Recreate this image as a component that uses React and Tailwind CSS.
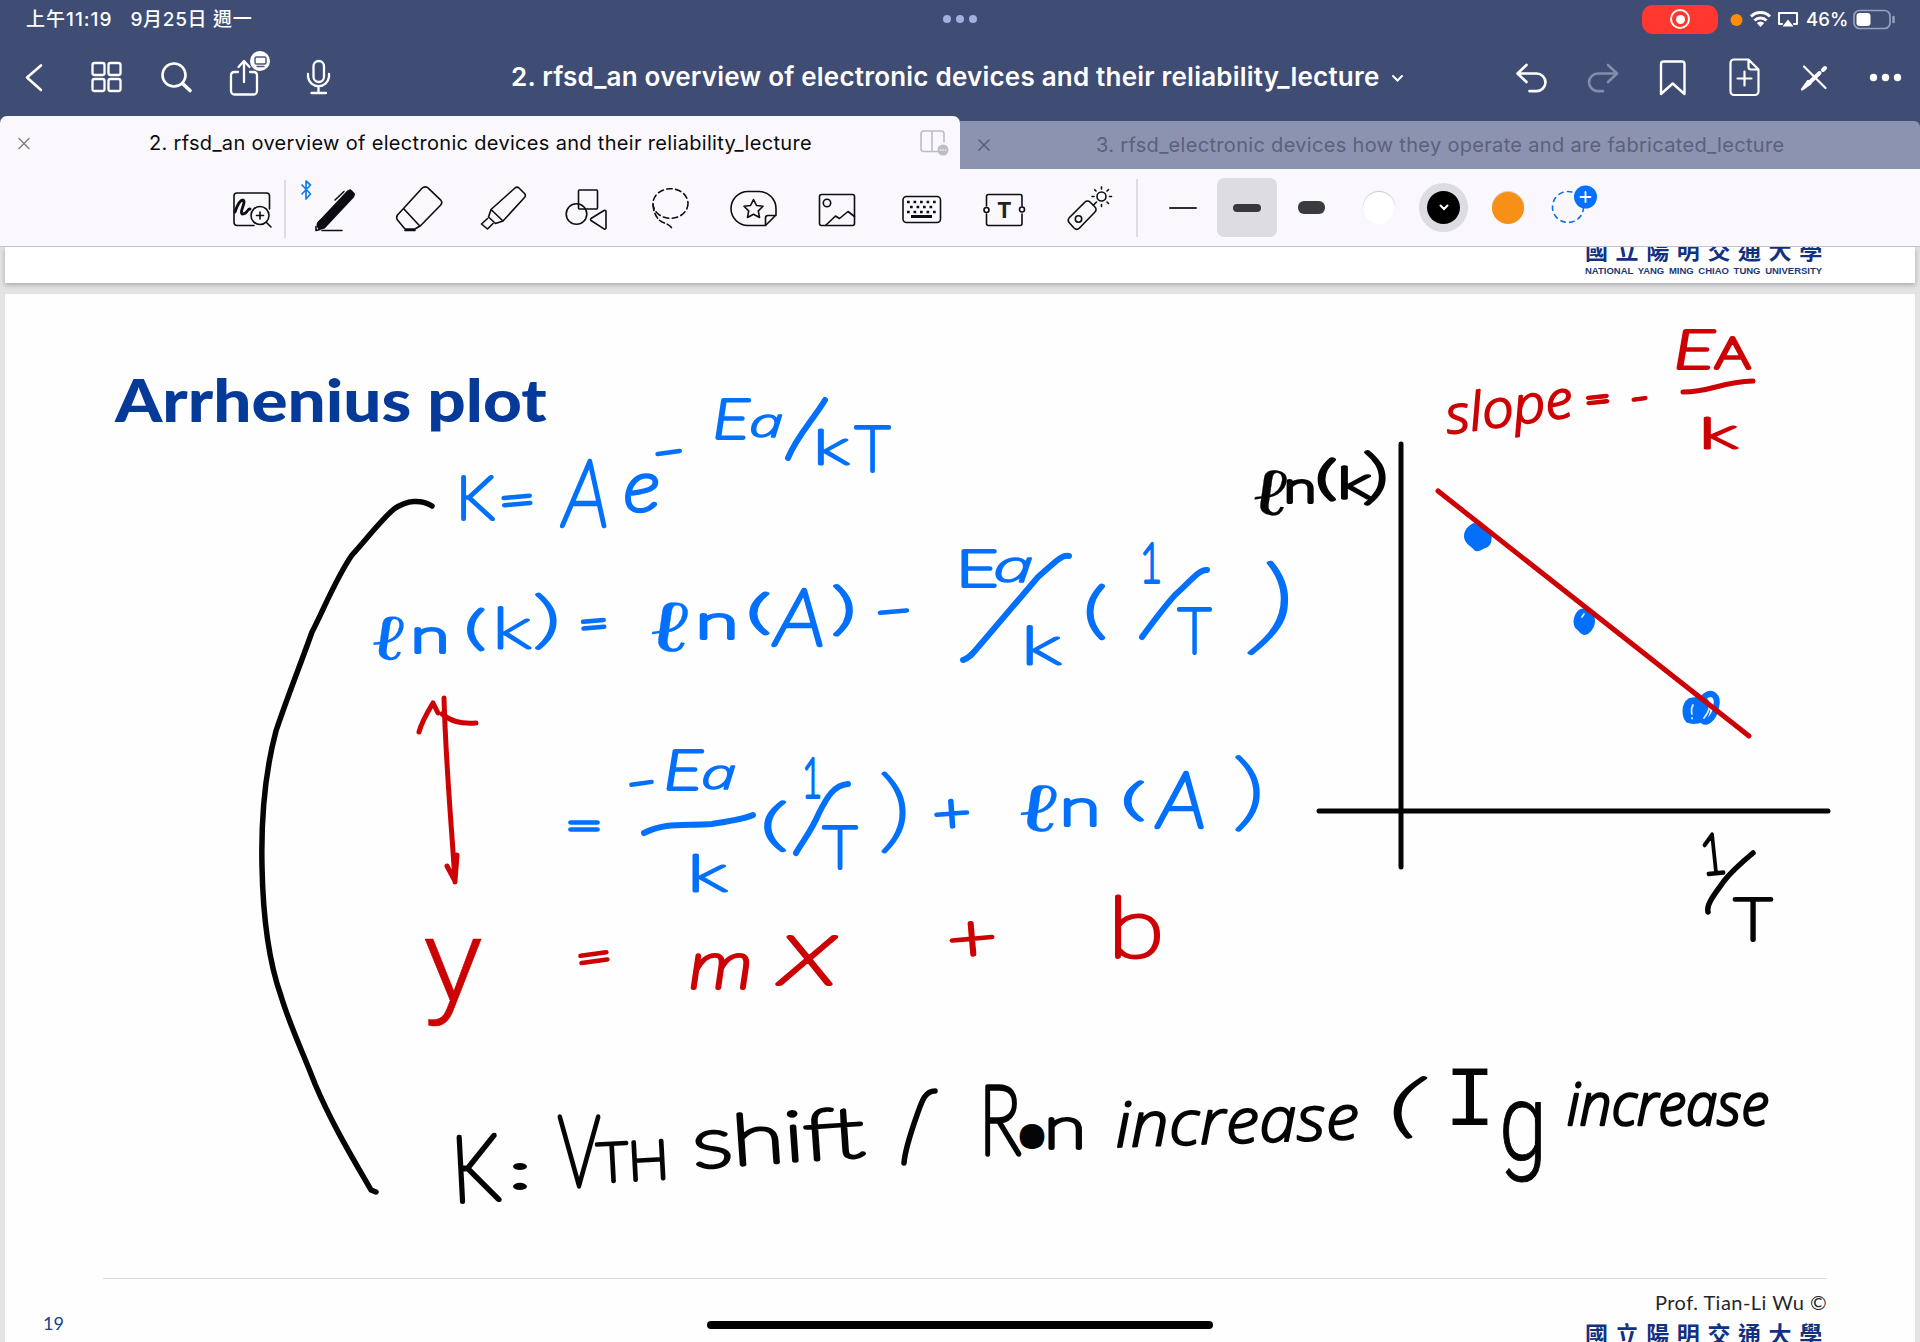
import React from "react";

const BLUE = "#0270fb";
const RED = "#cc0205";
const INK = "#050507";

/* A cell of a bar: its viewBox is the slice of the screen that it covers. */
function Cell({ x, y, w, h, children, stroke = "#fff", sw = 2.6, label }) {
  return (
    <svg
      aria-label={label}
      width={w}
      height={h}
      viewBox={`${x} ${y} ${w} ${h}`}
      className="block shrink-0"
      fill="none"
      stroke={stroke}
      strokeWidth={sw}
      strokeLinecap="round"
      strokeLinejoin="round"
    >
      {children}
    </svg>
  );
}

function StatusBar() {
  return (
    <div className="flex h-[38px] items-center text-[18px] leading-none text-white">
      <div className="flex w-[940px] items-center gap-[18px] pl-[26px] text-[19px] font-medium">
        <span className="tracking-[1px]">上午11:19</span>
        <span className="tracking-[0.700px]">9月25日 週一</span>
      </div>
      <div className="flex w-[40px] justify-center gap-[5px]">
        <i className="size-[8px] rounded-full bg-[#a3afde]" />
        <i className="size-[8px] rounded-full bg-[#a3afde]" />
        <i className="size-[8px] rounded-full bg-[#a3afde]" />
      </div>
      <div className="ml-[662px] flex h-[29px] w-[76px] items-center justify-center rounded-[11px] bg-[#ff372f]">
        <div className="flex size-[20px] items-center justify-center rounded-full border-2 border-white">
          <i className="size-[9px] rounded-full bg-white" />
        </div>
      </div>
      <Cell x={1718} y={0} w={86} h={38} label="status" sw={2}>
        <circle cx="1736.5" cy="20" r="6" fill="#ff8d0a" stroke="none" />
        <path d="M1751 16.5a13.5 13.5 0 0 1 19 0M1754.5 20.5a8.6 8.6 0 0 1 12 0" strokeWidth="3" strokeLinecap="butt" />
        <path d="M1760.500 27l-3.700-4a5.300 5.300 0 0 1 7.400 0z" fill="#fff" stroke="none" />
        <path d="M1782 24h-3V13h18v11h-3" />
        <path d="M1788 19.500l5.500 7h-11z" fill="#fff" stroke="none" />
      </Cell>
      <span className="ml-[2px] w-[46px] text-[18.500px] font-medium tracking-[0.100px]">46%</span>
      <Cell x={1852} y={0} w={44} h={38} label="battery">
        <rect x="1854" y="10.500" width="36" height="18" rx="5.500" stroke="#98a1bd" strokeWidth="1.700" />
        <path d="M1893.500 17v5" stroke="#98a1bd" strokeWidth="2.500" />
        <rect x="1856.500" y="13" width="14" height="13" rx="3" fill="#fff" stroke="none" />
      </Cell>
    </div>
  );
}

function NavBar() {
  return (
    <div className="flex h-[78px] items-center">
      <Cell x={0} y={38} w={70} h={78} label="back">
        <path d="M41 65.500L27 77.500l14 12.500" />
      </Cell>
      <Cell x={70} y={38} w={70} h={78} label="pages" sw={2.3}>
        <rect x="92.500" y="63" width="12" height="12" rx="2" />
        <rect x="108.500" y="63" width="12" height="12" rx="2" />
        <rect x="92.500" y="79" width="12" height="12" rx="2" />
        <rect x="108.500" y="79" width="12" height="12" rx="2" />
      </Cell>
      <Cell x={140} y={38} w={70} h={78} label="search">
        <circle cx="174" cy="75" r="11.500" />
        <path d="M182.500 83.500l7.500 7" strokeWidth="3.600" />
      </Cell>
      <Cell x={210} y={38} w={73} h={78} label="share" sw={2.3}>
        <path d="M238 72h-4a3 3 0 0 0-3 3v16a3.500 3.500 0 0 0 3.500 3.500h19a3.500 3.500 0 0 0 3.500-3.500V75a3 3 0 0 0-3-3h-4" />
        <path d="M244 82V62M238.500 67l5.500-6 5.500 6" />
        <circle cx="260" cy="61" r="10" fill="#fff" stroke="none" />
        <rect x="255" y="57" width="11" height="7" rx="1.500" stroke="#4c5a80" strokeWidth="1.500" />
        <path d="M257 66.500h7" stroke="#4c5a80" strokeWidth="1.300" />
      </Cell>
      <Cell x={283} y={38} w={70} h={78} label="microphone" sw={2.3}>
        <rect x="313.500" y="61" width="10.500" height="21" rx="5.200" />
        <path d="M308 74v3a10.600 10.600 0 0 0 21 0v-3M318.500 87v5M311.500 93h14.500" />
      </Cell>
      <div className="flex w-[1143px] items-center pl-[158px]">
        <h1 className="whitespace-nowrap text-[26px] font-semibold leading-none tracking-[0.210px] text-white">
          2. rfsd_an overview of electronic devices and their reliability_lecture
        </h1>
        <svg className="ml-[12px] mt-[3px] shrink-0" width="13" height="9" viewBox="0 0 13 9" fill="none" stroke="#fff" strokeWidth="2" strokeLinecap="round">
          <path d="M2 2l4.500 4.500L11 2" />
        </svg>
      </div>
      <Cell x={1496} y={38} w={71} h={78} label="undo">
        <path d="M1526.500 65l-9 8.500 9 8.500M1518 73.500h18.500a9 8.800 0 0 1 0 17.600h-7" />
      </Cell>
      <Cell x={1567} y={38} w={71} h={78} label="redo" stroke="#848daa">
        <path d="M1608 65l9 8.500-9 8.500M1616.500 73.500h-18.500a9 8.800 0 0 0 0 17.600h5" />
      </Cell>
      <Cell x={1638} y={38} w={71} h={78} label="bookmark" sw={2.4}>
        <path d="M1661 94V64a2.500 2.500 0 0 1 2.500-2.500h18.500a2.500 2.500 0 0 1 2.500 2.500v30l-11.800-10.500z" />
      </Cell>
      <Cell x={1709} y={38} w={71} h={78} label="add page" sw={2.2}>
        <path d="M1748.500 59.500H1734a3.500 3.500 0 0 0-3.500 3.500v28.500a3.500 3.500 0 0 0 3.500 3.500h21a3.500 3.500 0 0 0 3.500-3.500V69.500zM1748.500 60v7a2.500 2.500 0 0 0 2.500 2.500h7M1744.500 71.500v14M1737.500 78.500h14" />
      </Cell>
      <Cell x={1780} y={38} w={70} h={78} label="read only" sw={2.2}>
        <path d="M1804 66.500l21.500 21.500" />
        <path d="M1825 68l-2 2M1819.500 73l-10 9.500" strokeWidth="4" />
        <path d="M1808 81l-6 8.500 8.500-6z" fill="#fff" />
      </Cell>
      <Cell x={1850} y={38} w={70} h={78} label="more">
        <g fill="#fff" stroke="none">
          <circle cx="1873.500" cy="77.500" r="3.700" />
          <circle cx="1885.500" cy="77.500" r="3.700" />
          <circle cx="1897.500" cy="77.500" r="3.700" />
        </g>
      </Cell>
    </div>
  );
}

function Tabs() {
  return (
    <div className="flex h-[53px] items-end">
      <div className="flex h-[53px] w-[960px] items-center rounded-t-[7px] bg-[#faf8fc]">
        <Cell x={0} y={116} w={48} h={53} stroke="#818186" sw={1.5} label="close tab">
          <path d="M19 138.500l10 10M29 138.500l-10 10" />
        </Cell>
        <span className="w-[852px] whitespace-nowrap pl-[101px] text-[20px] leading-none tracking-[0.320px] text-[#0b0b0d]">
          2. rfsd_an overview of electronic devices and their reliability_lecture
        </span>
        <Cell x={900} y={116} w={60} h={53} stroke="#bdbcc1" sw={1.6} label="split view">
          <path d="M938 151.500h-14a3 3 0 0 1-3-3V134a3 3 0 0 1 3-3h17a3 3 0 0 1 3 3v8M932 131v20.500" />
          <circle cx="943" cy="150" r="5.500" fill="#bdbcc1" stroke="none" />
          <path d="M940.500 150h.1M943 150h.1M945.500 150h.1" stroke="#fff" strokeWidth="1.500" />
        </Cell>
      </div>
      <div className="flex h-[48px] w-[960px] items-center rounded-tr-[6px] bg-[#8b93b1]">
        <Cell x={960} y={121} w={48} h={48} stroke="#565c77" sw={1.5} label="close tab">
          <path d="M979 140l10 10M989 140l-10 10" />
        </Cell>
        <span className="whitespace-nowrap pl-[88px] text-[20px] leading-none tracking-[0.320px] text-[#5b617b]">
          3. rfsd_electronic devices how they operate and are fabricated_lecture
        </span>
      </div>
    </div>
  );
}

const tools = [
  {
    name: "zoom window",
    art: (
      <>
        <path d="M254 225.500h-17a3 3 0 0 1-3-3V196a3 3 0 0 1 3-3h29.500a3 3 0 0 1 3 3v13" />
        <path d="M235 212c2-6 5-12 8-12 4 1-5 14 0 14 4 0 5-6 7-5" strokeWidth="2.800" />
        <circle cx="260" cy="215.500" r="9" fill="#faf8fc" />
        <path d="M256.500 215.500h7M260 212v7M266.500 222.500l4.500 4.500" />
        <path d="M285 180.500v57" stroke="#d3d2d7" strokeWidth="1.500" />
      </>
    ),
  },
  {
    name: "pen",
    art: (
      <>
        <path d="M302 185l8.500 9-4.500 5v-18l4.500 4-8.500 9" stroke="#0a7df0" strokeWidth="1.700" />
        <path d="M351 193.500l-30 32" strokeWidth="9.500" strokeLinecap="butt" />
        <path d="M350 192l2.500 2.500" strokeWidth="5" />
        <path d="M323 223l-2 2" strokeWidth="9" />
        <path d="M316 230.500v-4M316 230.500l4-1M322 230.500h20M335 200l9-8.500" strokeWidth="1.600" />
      </>
    ),
  },
  {
    name: "eraser",
    art: (
      <path d="M403.500 208.500l18.500-20.200a4.500 4.500 0 0 1 6.500 0l12 11.500a4 4 0 0 1 0 5.500l-20.500 21zM403.500 208.500l-6 6.500a4.500 4.500 0 0 0 0 5l7.500 9h10l5-3M405 230.500h10" />
    ),
  },
  {
    name: "highlighter",
    art: (
      <path d="M491 209.500l24-21.500a3 3 0 0 1 4 0l5.500 5.500a3 3 0 0 1 0 4L503 221zM491 209.500l-2.500 7.500 7 6.500 7.500-2.500M487.500 218.500l-6 5.500 6 5 5.500-5.500" />
    ),
  },
  {
    name: "shapes",
    art: (
      <>
        <rect x="578.500" y="190" width="19" height="19" rx="1" />
        <circle cx="576.500" cy="214" r="10.300" />
        <path d="M604 210.500a1.300 1.300 0 0 1 2 1.200v16a1.300 1.300 0 0 1-2 1.200l-13-8.400a1.300 1.300 0 0 1 0-2z" />
      </>
    ),
  },
  {
    name: "lasso",
    art: (
      <>
        <ellipse cx="670.500" cy="203.500" rx="17.500" ry="14.800" strokeDasharray="5.500 3.500" />
        <path d="M653 205c1 9 4 14 9 17 6 2 9 4 10.500 7.500" strokeDasharray="5.500 3" />
      </>
    ),
  },
  {
    name: "stickers",
    art: (
      <>
        <path d="M765 225.500h-17a17 17 0 0 1 0-34h11a17 17 0 0 1 17 17v6.500l-10.500 10.500v-7.500a2.500 2.500 0 0 1 2.500-2.500h8" />
        <path d="M753.500 199.500l3 6 6.500.8-4.700 4.600 1.200 6.600-6-3.200-6 3.200 1.200-6.600-4.700-4.600 6.500-.8z" />
      </>
    ),
  },
  {
    name: "image",
    art: (
      <>
        <rect x="819.500" y="194.500" width="35" height="31" rx="2" />
        <circle cx="827" cy="203" r="3.700" />
        <path d="M826 225l9.500-9 4 2.500 8.500-7 6.500 5" />
      </>
    ),
  },
  {
    name: "keyboard",
    art: (
      <>
        <rect x="903" y="196.500" width="37.500" height="26" rx="3.500" />
        <path d="M907 202h29M907 212h29" strokeDasharray="2.700 3.800" strokeLinecap="butt" strokeWidth="2.700" />
        <path d="M910 207h24" strokeDasharray="2.700 3.800" strokeLinecap="butt" strokeWidth="2.700" />
        <path d="M911 216.500h21" strokeLinecap="butt" strokeWidth="3" />
      </>
    ),
  },
  {
    name: "text box",
    art: (
      <>
        <path d="M986.500 206v-9.500a2 2 0 0 1 2-2h31.500a2 2 0 0 1 2 2v9.500M986.500 214v9.500a2 2 0 0 0 2 2h31.500a2 2 0 0 0 2-2V214" />
        <circle cx="986.500" cy="210" r="2.500" />
        <circle cx="1022" cy="209.500" r="2.500" />
        <text x="1004.300" y="218" textAnchor="middle" fill="#222" stroke="none" fontSize="22" fontWeight="700">T</text>
      </>
    ),
  },
  {
    name: "laser pointer",
    art: (
      <>
        <path d="M1069.500 217.500l15.500-15.500a3.500 3.500 0 0 1 5 0l5 5a3.500 3.500 0 0 1 0 5l-15.500 16a4 4 0 0 1-5.500 0l-4.500-5a4 4 0 0 1 0-5.500z" />
        <circle cx="1078.500" cy="219" r="3.200" />
        <circle cx="1101.500" cy="196.500" r="4.500" />
        <path d="M1101.500 187v2M1101.500 204.500v2M1092 196.500h2M1109.500 196.500h2M1094.700 189.700l1.300 1.300M1107 202l1.500 1.500M1108.500 189.700l-1.500 1.300M1096.500 202l-3 3" />
      </>
    ),
  },
];

function Toolbar() {
  return (
    <div className="flex h-[77px] items-center bg-[#faf8fc] pl-[210px]">
      {tools.map((t, i) => (
        <Cell key={t.name} label={t.name} x={210 + 84 * i} y={169} w={84} h={77} stroke="#0c0c14" sw={1.6}>
          {t.art}
        </Cell>
      ))}
      <i className="ml-[2px] h-[58px] w-[2px] bg-[#dddce1]" />
      <i className="ml-[31px] h-[2px] w-[28px] rounded-full bg-[#2d2c30]" />
      <div className="ml-[20px] flex h-[59px] w-[60px] items-center justify-center rounded-[7px] bg-[#dddce0]">
        <i className="h-[8px] w-[28px] rounded-[4px] bg-[#38373b]" />
      </div>
      <i className="ml-[21px] h-[13px] w-[27px] rounded-[6px] bg-[#3b3a3e]" />
      <i className="ml-[38px] size-[32px] rounded-full bg-white shadow-[0_-1px_1px_#c9c8cc]" />
      <div className="ml-[24px] flex size-[49px] items-center justify-center rounded-full bg-[#dddce0]">
        <div className="flex size-[33px] items-center justify-center rounded-full bg-black">
          <svg width="10" height="7" viewBox="0 0 10 7" fill="none" stroke="#fff" strokeWidth="2" strokeLinecap="round">
            <path d="M1.500 1.500L5 5l3.500-3.500" />
          </svg>
        </div>
      </div>
      <i className="ml-[24px] size-[32px] rounded-full bg-[#f79016] shadow-[0_-1px_1px_#cfc9c4]" />
      <div className="ml-[16px]">
        <Cell x={1540} y={169} w={80} h={77} label="add colour" stroke="#1172dc" sw={1.6}>
          <circle cx="1568" cy="207" r="15.500" strokeDasharray="4.500 4.500" />
          <circle cx="1585.500" cy="197" r="11.500" fill="#0670ff" stroke="none" />
          <path d="M1580.500 197h10M1585.500 192v10" stroke="#fff" strokeWidth="1.800" />
        </Cell>
      </div>
    </div>
  );
}

const LATO = "Lato, sans-serif";
const OPEN = "'Open Sans', sans-serif";
const SCRIPT = "'DejaVu Sans', sans-serif";
const ROBOTO = "Roboto, sans-serif";
const MONO = "'Liberation Mono', monospace";

/* Handwritten words: [text, x, baseline, width, size, rotation, italic, font, stroke] */
const blueWords = [
  ["K", 456, 519, 38, 60, 0, 0],
  ["=", 500, 519, 37, 50, -5, 0],
  ["A", 563, 526, 46, 92, 0, 1, LATO, 4.5],
  ["e", 624, 511, 36, 70, 0, 1, LATO, 4.5],
  ["−", 655, 470, 32, 46, -8, 0],
  ["E", 713, 438, 36, 54, 0, 1],
  ["a", 749, 437, 34, 40, 0, 1, OPEN, 1.5],
  ["k", 813, 464, 36, 48, 0, 0, LATO, 3],
  ["T", 855, 471, 35, 62, 0, 0],
  ["ℓ", 371, 657, 30, 62, 8, 0, SCRIPT, 0.2],
  ["n", 411, 652, 38, 46, 0, 0],
  ["(", 465, 644, 20, 46, 0, 0, LATO, 3.5],
  ["k", 492, 648, 39, 56, 0, 0, LATO, 3],
  [")", 533, 641, 28, 62, 0, 0, LATO, 3],
  ["=", 580, 641, 30, 46, -5, 0],
  ["ℓ", 649, 648, 36, 70, 8, 0, SCRIPT, 0.2],
  ["n", 696, 638, 42, 46, 0, 0],
  ["(", 747, 628, 23, 46, 0, 0, LATO, 3.5],
  ["A", 775, 645, 50, 78, 0, 1, LATO, 4.5],
  [")", 832, 628, 24, 56, 0, 0, LATO, 3.5],
  ["−", 876, 630, 38, 50, -5, 0],
  ["E", 956, 586, 42, 50, 0, 0],
  ["a", 993, 582, 40, 44, 0, 1, OPEN, 1.5],
  ["k", 1021, 664, 40, 52, 0, 0, LATO, 3],
  ["(", 1084, 631, 22, 60, 0, 0],
  ["1", 1140, 582, 22, 54, 0, 0],
  ["T", 1178, 653, 33, 62, 0, 0],
  [")", 1252, 641, 44, 104, 0, 1, LATO, 3],
  ["=", 565, 842, 38, 48, 0, 0],
  ["−", 629, 802, 30, 50, -8, 0],
  ["E", 664, 789, 38, 54, 0, 1],
  ["a", 701, 789, 35, 42, 0, 1, OPEN, 1.5],
  ["k", 687, 891, 40, 50, 0, 0, LATO, 3],
  ["(", 760, 844, 28, 56, 0, 0, LATO, 3],
  ["1", 802, 797, 20, 54, 0, 0],
  ["T", 823, 868, 34, 58, 0, 0],
  [")", 878, 841, 34, 90, 0, 0, LATO, 3],
  ["+", 934, 833, 38, 54, -4, 0],
  ["ℓ", 1018, 828, 36, 66, 8, 0, SCRIPT, 0.2],
  ["n", 1060, 825, 40, 50, 0, 0],
  ["(", 1121, 815, 24, 44, 0, 0, LATO, 3],
  ["A", 1158, 827, 48, 76, 0, 1, LATO, 4.5],
  [")", 1232, 820, 34, 84, 0, 0, LATO, 3],
];

const redWords = [
  ["y", 423, 1001, 60, 116, 0, 0, ROBOTO, 0.5],
  ["=", 578, 977, 37, 50, -8, 0],
  ["m", 689, 988, 64, 66, 0, 1],
  ["x", 780, 984, 58, 96, 0, 1],
  ["+", 949, 963, 50, 66, -5, 0],
  ["b", 1108, 957, 56, 84, 0, 0],
  ["slope", 1448, 434, 128, 52, -8, 1, OPEN, 2],
  ["=", 1586, 413, 26, 36, -6, 0],
  ["-", 1632, 413, 19, 44, -8, 0],
  ["E", 1674, 368, 40, 52, 0, 1],
  ["A", 1715, 368, 35, 42, 0, 0],
  ["k", 1699, 448, 38, 42, 0, 0, LATO, 3],
];

const blackWords = [
  ["ℓ", 1252, 512, 32, 64, 8, 0, SCRIPT, 0.2],
  ["n", 1284, 502, 32, 42, 0, 0],
  ["(", 1316, 494, 20, 46, 0, 0],
  ["k", 1337, 498, 34, 44, 0, 0, LATO, 3.5],
  [")", 1362, 497, 28, 60, 0, 0, LATO, 3],
  ["1", 1702, 875, 26, 56, -6, 0],
  ["T", 1734, 940, 38, 58, 0, 0],
  ["K", 453, 1202, 48, 92, -3, 0, LATO, 5],
  [":", 509, 1188, 22, 48, 0, 0],
  ["V", 558, 1186, 42, 98, 0, 0, LATO, 5.5],
  ["TH", 598, 1182, 72, 54, -3, 0],
  ["shift", 694, 1168, 172, 70, -4, 0],
  ["R", 979, 1154, 42, 96, 0, 0, LATO, 5.5],
  ["o", 1019, 1147, 26, 42, 0, 0],
  ["n", 1044, 1148, 42, 58, 0, 0],
  ["increase", 1116, 1147, 244, 62, -2, 1, OPEN, 2],
  ["(", 1388, 1129, 34, 68, 0, 1, LATO, 3],
  ["I", 1444, 1125, 52, 86, 0, 0, MONO, 0],
  ["g", 1499, 1159, 48, 108, 0, 0, ROBOTO, 1],
  ["increase", 1567, 1125, 202, 58, 0, 1, OPEN, 2.5],
];

function Words({ list, color }) {
  return (
    <g fill={color} stroke={color} strokeLinejoin="round">
      {list.map(([t, x, y, w, s, r, it, font = LATO, sw = 4], i) => (
        <text
          key={i}
          x={x}
          y={y}
          fontFamily={font}
          fontWeight={font === ROBOTO ? 300 : 200}
          fontSize={s}
          fontStyle={it ? "italic" : "normal"}
          strokeWidth={sw}
          textLength={w}
          lengthAdjust="spacingAndGlyphs"
          transform={`rotate(${r} ${x} ${y})`}
        >
          {t}
        </text>
      ))}
    </g>
  );
}

/* Pen layer over the slide: formula words, fraction bars, arrow, and the plot. */
function Annotations() {
  return (
    <svg
      className="absolute left-0 top-0"
      width="1910"
      height="1048"
      viewBox="5 294 1910 1048"
      fill="none"
      strokeLinecap="round"
      strokeLinejoin="round"
    >
      <Words list={blueWords} color={BLUE} />
      <g stroke={BLUE} strokeWidth="6">
        <path d="M825 400C813 420 797 436 788 458" />
        <path d="M1069 556C1062 554 1054 563 1038 577L980 645C974 652 970 658 963 660" />
        <path d="M1207 570C1199 569 1190 582 1175 595C1166 605 1153 622 1142 637" />
        <path d="M644 833C665 822 685 826 712 824C730 821 744 819 753 815" />
        <path d="M848 784C834 785 827 797 819 813C811 832 802 842 796 853" />
      </g>
      <g fill={BLUE} stroke={BLUE} strokeWidth="4">
        <path d="M1474 525l15 8c2 6 0 12-4 13-4 1-5 4-9 3-3-4-7-5-9-9-3-6 1-12 7-15z" />
        <path d="M1581 611c6-2 12 3 12 10 0 6-5 12-9 12-4-1-4-5-7-6-3-5-1-13 4-16z" />
        <path d="M1690 700l13-2c7 4 6 12 3 19-3 5-13 6-18 4-4-4-6-16 2-21z" />
      </g>
      <path d="M1704 697c8-7 15-1 12 10-1 9-8 17-13 14" stroke={BLUE} strokeWidth="6" />
      <path d="M1693 705c-2 4-2 6-1 9M1692 718v.5M1582 617l2-3M1709 702c2 6-1 11-5 16" stroke="#d8eaff" strokeWidth="1.800" />
      <g stroke={INK} strokeWidth="5.500">
        <path d="M432 506C421 499 407 500 394 509C381 520 365 541 352 555C336 578 323 611 312 632C301 663 287 698 276 731C264 776 261 820 262 866C263 920 270 965 281 996C290 1026 304 1055 315 1084C332 1124 352 1157 371 1190L376 1192" />
        <path d="M1401 444V867M1319 811H1828" strokeWidth="5" />
        <path d="M1753 853C1741 863 1731 872 1724 881C1715 894 1706 904 1708 912" />
        <path d="M935 1091C925 1091 922 1101 917 1115C911 1132 905 1150 904 1163" />
      </g>
      <ellipse cx="1031" cy="1137" rx="10" ry="11" fill={INK} />
      <Words list={redWords} color={RED} />
      <g stroke={RED} strokeWidth="5">
        <path d="M444 698C446 770 452 830 455 882M447 866L455 881L457 855" />
        <path d="M419 732C422 721 427 713 433 703L438 713M442 714C451 721 459 724 476 723" />
        <path d="M1683 392C1711 392 1720 382 1753 381" />
        <path d="M1438 491L1749 736" />
      </g>
      <Words list={blackWords} color={INK} />
    </svg>
  );
}

function UniversityName() {
  return (
    <div className="whitespace-nowrap font-['Noto_Sans_CJK_TC',sans-serif] text-[23px] font-bold leading-[23px] tracking-[7.600px] text-[#12317f]">
      國立陽明交通大學
    </div>
  );
}

export default function App() {
  return (
    <div className="flex h-[1342px] w-[1920px] flex-col overflow-hidden bg-[#3f4d75] font-['Inter','Noto_Sans_CJK_TC',sans-serif]">
      <StatusBar />
      <NavBar />
      <Tabs />
      <Toolbar />
      <main className="flex flex-1 flex-col overflow-hidden border-t border-[#c4c4c8] bg-[#e3e2e5] px-[5px]">
        <section className="flex h-[36px] shrink-0 justify-end overflow-hidden bg-white pr-[84px] shadow-[0_2px_5px_#a9a9ad]">
          <div className="-mt-[9px] w-[246px]">
            <UniversityName />
            <div className="mt-[5px] whitespace-nowrap font-['Liberation_Sans',sans-serif] text-[9.500px] font-bold leading-[10px] tracking-[0px] text-[#1c3878] [word-spacing:2px]">
              NATIONAL YANG MING CHIAO TUNG UNIVERSITY
            </div>
          </div>
        </section>
        <section className="relative mt-[11px] flex flex-1 flex-col bg-[#fefefe]">
          <h2 className="ml-[110px] mt-[64px] h-[920px] w-fit origin-left scale-x-[1.143] whitespace-nowrap font-['Lato',sans-serif] text-[59px] font-black leading-[84px] text-[#063a99]">
            Arrhenius plot
          </h2>
          <div className="ml-[98px] w-[1724px] border-t border-[#dcdce0]" />
          <div className="flex justify-between">
            <span className="ml-[38px] mt-[34px] font-['Lato',sans-serif] text-[18px] leading-[20px] text-[#173f94]">19</span>
            <div className="mt-[11px] w-[330px] pr-[84px]">
              <div className="mb-[8px] -ml-[20px] whitespace-nowrap pr-[4px] text-right font-['Lato',sans-serif] text-[20px] leading-[24px] tracking-[0.480px] text-[#26262a]">
                Prof. Tian-Li Wu ©
              </div>
              <UniversityName />
            </div>
          </div>
          <Annotations />
          <div className="absolute left-[702px] top-[1027px] h-[8px] w-[506px] rounded-full bg-black" />
        </section>
      </main>
    </div>
  );
}
